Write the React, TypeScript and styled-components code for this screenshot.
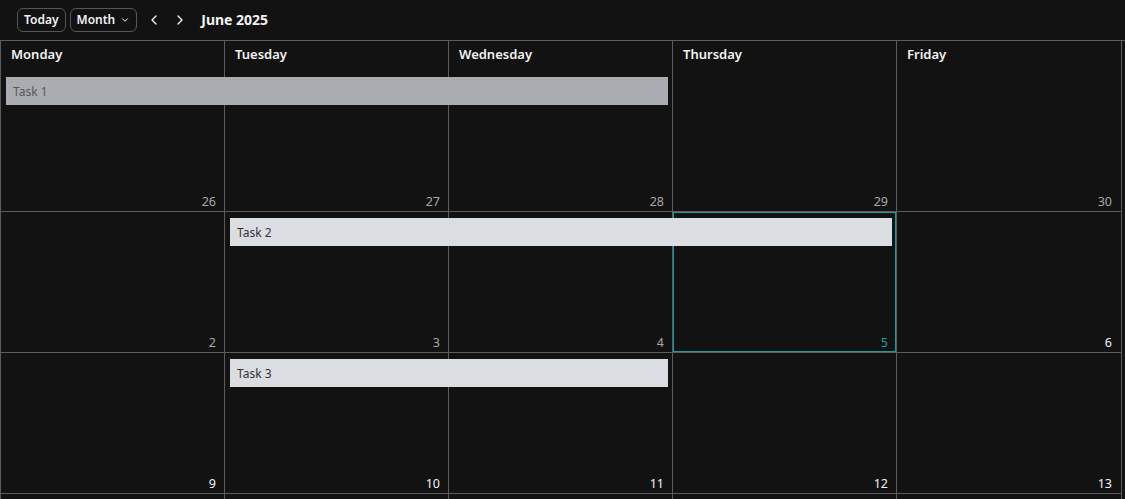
import React from 'react'
import styled, { createGlobalStyle } from 'styled-components'

const GlobalStyle = createGlobalStyle`
    html, body {
        margin: 0;
        padding: 0;
        background: #121212;
        font-family: "Noto Sans", "Open Sans", sans-serif;
        color: #f2f2f2;
        overflow: hidden;
    }
`

const Page = styled.div`
    width: 1125px;
    height: 499px;
    background: #121212;
    overflow: hidden;
`

const Toolbar = styled.div`
    display: flex;
    align-items: center;
    height: 41px;
    padding: 0 0 1px 17px;
    gap: 4px;
    border-bottom: 1px solid #5c5c5c;
    box-sizing: border-box;
`

const ToolButton = styled.button`
    display: flex;
    align-items: center;
    gap: 5px;
    height: 24px;
    padding: 0 6px;
    background: transparent;
    color: #f2f2f2;
    border: 1px solid #555;
    border-radius: 6px;
    font-family: inherit;
    font-size: 12px;
    font-weight: 600;
    cursor: pointer;
`

const NavButton = styled.button`
    display: flex;
    align-items: center;
    justify-content: center;
    width: 22px;
    height: 24px;
    padding: 0;
    background: transparent;
    border: none;
    color: #f2f2f2;
    cursor: pointer;
`

const Title = styled.div`
    margin-left: 6px;
    font-size: 14px;
    font-weight: 700;
`

const Grid = styled.div`
    width: 1122px;
`

const HeaderRow = styled.div`
    display: grid;
    grid-template-columns: repeat(5, 224px);
    height: 30px;
    border-right: 1px solid #5c5c5c;
`

const DayName = styled.div`
    border-left: 1px solid #5c5c5c;
    padding: 4px 10px;
    font-size: 13px;
    font-weight: 600;
`

const WeekRow = styled.div`
    display: grid;
    grid-template-columns: repeat(5, 224px);
    grid-template-rows: 140px;
    border-bottom: 1px solid #5c5c5c;
    border-right: 1px solid #5c5c5c;
`

const DayCell = styled.div<{ $col: number; $today?: boolean }>`
    grid-row: 1;
    grid-column: ${(p) => p.$col};
    border-left: 1px solid #5c5c5c;
    display: flex;
    align-items: flex-end;
    justify-content: flex-end;
    padding: 0 8px 1px 0;
    box-shadow: ${(p) => (p.$today ? 'inset 0 0 0 1px #1b9c9c' : 'none')};
`

const DayNumber = styled.span<{ $tone: 'muted' | 'normal' | 'today' }>`
    font-size: 12.5px;
    color: ${(p) => (p.$tone === 'muted' ? '#a8a8a8' : p.$tone === 'today' ? '#1ba3a3' : '#eef3f8')};
`

const EventBar = styled.div<{ $start: number; $span: number; $light?: boolean }>`
    grid-row: 1;
    grid-column: ${(p) => p.$start} / span ${(p) => p.$span};
    align-self: start;
    margin: 6px 4px 0 6px;
    height: 28px;
    display: flex;
    align-items: center;
    padding-left: 7px;
    font-size: 12px;
    color: ${(p) => (p.$light ? '#333' : '#55585c')};
    background: ${(p) => (p.$light ? '#dadde1' : '#a9acb0')};
    z-index: 1;
`

type Tone = 'muted' | 'normal' | 'today'
type Day = { n?: number; tone: Tone }
type Ev = { title: string; start: number; span: number; light?: boolean }

const weeks: { days: Day[]; events: Ev[] }[] = [
    {
        days: [26, 27, 28, 29, 30].map((n) => ({ n, tone: 'muted' as const })),
        events: [{ title: 'Task 1', start: 1, span: 3 }],
    },
    {
        days: [
            { n: 2, tone: 'muted' },
            { n: 3, tone: 'muted' },
            { n: 4, tone: 'muted' },
            { n: 5, tone: 'today' },
            { n: 6, tone: 'normal' },
        ],
        events: [{ title: 'Task 2', start: 2, span: 3, light: true }],
    },
    {
        days: [9, 10, 11, 12, 13].map((n) => ({ n, tone: 'normal' as const })),
        events: [{ title: 'Task 3', start: 2, span: 2, light: true }],
    },
    {
        // next week, only its top edge is in view
        days: [0, 1, 2, 3, 4].map(() => ({ tone: 'normal' as const })),
        events: [],
    },
]

const dayNames = ['Monday', 'Tuesday', 'Wednesday', 'Thursday', 'Friday']

const Chevron = ({ dir }: { dir: 'left' | 'right' | 'down' }) => {
    const d = dir === 'left' ? 'M8 2 L4 6 L8 10' : dir === 'right' ? 'M4 2 L8 6 L4 10' : 'M3 4.5 L6 7.5 L9 4.5'
    const size = dir === 'down' ? 10 : 12
    return (
        <svg width={size} height={size} viewBox="0 0 12 12" fill="none">
            <path d={d} stroke="currentColor" strokeWidth={dir === 'down' ? 1.2 : 1.4} strokeLinecap="round" strokeLinejoin="round" />
        </svg>
    )
}

const App = () => {
    return (
        <Page>
            <GlobalStyle />
            <Toolbar>
                <ToolButton>Today</ToolButton>
                <ToolButton>
                    Month <Chevron dir="down" />
                </ToolButton>
                <NavButton style={{ marginLeft: 2 }}><Chevron dir="left" /></NavButton>
                <NavButton><Chevron dir="right" /></NavButton>
                <Title>June 2025</Title>
            </Toolbar>
            <Grid>
                <HeaderRow>
                    {dayNames.map((name) => (
                        <DayName key={name}>{name}</DayName>
                    ))}
                </HeaderRow>
                {weeks.map((week, i) => (
                    <WeekRow key={i}>
                        {week.days.map((day, j) => (
                            <DayCell key={j} $col={j + 1} $today={day.tone === 'today'}>
                                {day.n !== undefined && <DayNumber $tone={day.tone}>{day.n}</DayNumber>}
                            </DayCell>
                        ))}
                        {week.events.map((ev) => (
                            <EventBar key={ev.title} $start={ev.start} $span={ev.span} $light={ev.light}>
                                {ev.title}
                            </EventBar>
                        ))}
                    </WeekRow>
                ))}
            </Grid>
        </Page>
    )
}

export default App
